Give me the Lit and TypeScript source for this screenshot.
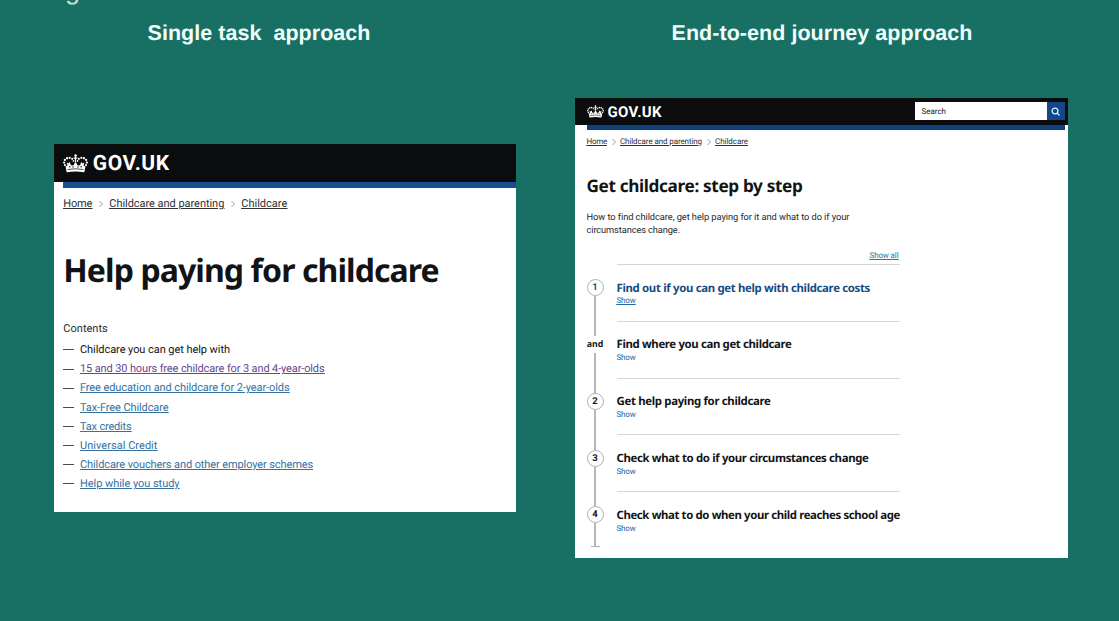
import { LitElement, html, css, svg, nothing } from "lit";
import { customElement, property, query } from "lit/decorators.js";

/** One line of text, tracked out or in so that it fills the given width. */
@customElement("fit-text")
class FitText extends LitElement {
  static styles = css`
    :host { display: inline-block; white-space: pre; }
    .line { text-decoration: inherit; }
  `;
  @property() text = "";
  @property({ type: Number }) width = 0;
  @query(".line") line!: HTMLElement;

  updated() {
    this.line.style.letterSpacing = "0px";
    const natural = this.line.getBoundingClientRect().width;
    if (this.width > 0 && natural > 0) {
      this.line.style.letterSpacing = `${(this.width - natural) / this.text.length}px`;
    }
  }
  render() {
    return html`<span class="line">${this.text}</span>`;
  }
}

const fit = (text: string, width: number, cls = "") =>
  html`<fit-text class=${cls} .text=${text} .width=${width}></fit-text>`;

const crown = svg`
  <g fill="currentColor">
    <circle cx="12" cy="1.500" r="1.200"/><path d="M11.400 2h1.200v6h-1.200zM10.200 3.200h3.600v1.200h-3.600z"/>
    <circle cx="8.800" cy="4.600" r="1"/><circle cx="6.400" cy="3.600" r="1.100"/><circle cx="3.900" cy="4" r="1.100"/>
    <circle cx="1.800" cy="5.600" r="1.100"/><circle cx="1.100" cy="8.100" r="1.100"/><circle cx="1.900" cy="10.500" r="1"/>
    <circle cx="15.200" cy="4.600" r="1"/><circle cx="17.600" cy="3.600" r="1.100"/><circle cx="20.100" cy="4" r="1.100"/>
    <circle cx="22.200" cy="5.600" r="1.100"/><circle cx="22.900" cy="8.100" r="1.100"/><circle cx="22.100" cy="10.500" r="1"/>
    <circle cx="10" cy="6.600" r=".8"/><circle cx="14" cy="6.600" r=".8"/>
    <path d="M3.500 17.200L2.500 11.600l1.800-.6-.8-3 2 1 .9-1.600 1.200 3.200 1.900.2 1-.6L11.300 8h1.400l.8 2.200 1 .6 1.900-.2 1.200-3.200.9 1.600 2-1-.8 3 1.800.6-1 5.600Q12 15.800 3.500 17.200z"/>
  </g>
  <g fill="#0b0c0d"><circle cx="6.600" cy="12" r=".7"/><circle cx="9.600" cy="12.200" r=".7"/><circle cx="14.400" cy="12.200" r=".7"/><circle cx="17.400" cy="12" r=".7"/></g>
  <path d="M4.500 14.700Q12 13.300 19.500 14.700" fill="none" stroke="#0b0c0d" stroke-width=".7"/>`;

const contents = [
  { text: "Childcare you can get help with", width: 150, kind: "plain" },
  { text: "15 and 30 hours free childcare for 3 and 4-year-olds", width: 244.5, kind: "visited" },
  { text: "Free education and childcare for 2-year-olds", width: 209.5, kind: "link" },
  { text: "Tax-Free Childcare", width: 88.5, kind: "link" },
  { text: "Tax credits", width: 51.5, kind: "link" },
  { text: "Universal Credit", width: 77.5, kind: "link" },
  { text: "Childcare vouchers and other employer schemes", width: 233, kind: "link" },
  { text: "Help while you study", width: 99.5, kind: "link" },
];

const steps = [
  { mark: "1", text: "Find out if you can get help with childcare costs", width: 253.5 },
  { mark: "and", text: "Find where you can get childcare", width: 175 },
  { mark: "2", text: "Get help paying for childcare", width: 154 },
  { mark: "3", text: "Check what to do if your circumstances change", width: 252 },
  { mark: "4", text: "Check what to do when your child reaches school age", width: 283.5 },
];

@customElement("app-root")
class AppRoot extends LitElement {
  static styles = css`
    :host {
      display: block; position: relative; box-sizing: border-box;
      width: 1119px; height: 621px; overflow: hidden;
      background: #187065; color: #111315; font-family: Roboto, "Noto Sans", sans-serif;
      text-rendering: geometricPrecision;
    }
    .slide-title { position: absolute; left: 65px; top: -26px; font: 27px/32px "Liberation Sans", sans-serif; color: #c3e3de; }
    .columns { display: grid; grid-template-columns: 462px 493px; column-gap: 59px; padding-left: 54px; }
    .column { display: flex; flex-direction: column; }
    h2 { margin: 0; font: bold 21.500px/30px "Liberation Sans", sans-serif; color: #effffc; padding-top: 17.500px; }
    .left h2 { padding-left: 93.500px; }
    .right h2 { padding-left: 96.500px; }
    .card { background: #fff; box-sizing: border-box; }
    .left .card { margin-top: 96.500px; height: 367.500px; padding-left: 9.300px; }
    .right .card { margin-top: 50.500px; height: 459.500px; padding-left: 11.500px; }
    .head { display: flex; align-items: center; background: #0b0c0d; color: #fff; font-weight: 700; }
    .left .head { height: 38px; margin-left: -9.300px; padding-left: 9.300px; font-size: 21px; line-height: 26px; gap: 4.500px; }
    .left .head fit-text { padding-top: 1px; }
    .right .head { height: 27px; margin-left: -11.500px; padding-left: 11.500px; font-size: 15px; gap: 4px; }
    .crown { display: block; flex: none; }
    .left .crown { width: 25px; height: 19px; }
    .right .crown { width: 17px; height: 13px; }
    .bar { background: #174f91; }
    .left .bar { height: 6px; }
    .right .bar { height: 4.500px; margin-right: 3.500px; background: #10407d; }
    .search { display: flex; margin-left: auto; margin-right: 3.500px; margin-bottom: 1px; height: 18px; width: 150px; background: #fff; color: #222; font: 8px/19px Roboto, sans-serif; }
    .query { flex: 1; padding-left: 7px; }
    .go { display: grid; place-items: center; width: 18px; background: #14478a; }
    .crumbs { display: flex; align-items: center; color: #303236; }
    .crumbs fit-text { text-decoration: underline; }
    .left .crumbs { font-size: 11px; line-height: 20px; margin-top: 6px; }
    .right .crumbs { font-size: 8px; line-height: 12px; margin-top: 6.500px; }
    .chev { display: grid; place-items: center; }
    .left .chev { width: 17px; }
    .right .chev { width: 13px; }
    h1 { margin: 0; font-weight: 700; font-family: "Noto Sans", sans-serif; }
    .left h1 { font-size: 32px; line-height: 40px; margin-top: 36.500px; }
    .right h1 { font-size: 17.200px; line-height: 24px; margin-top: 26.500px; }
    .label { font-size: 11px; line-height: 20px; margin-top: 28.500px; color: #2b2d30; }
    ul { list-style: none; margin: 1.300px 0 0; padding: 0; font-size: 11px; }
    li { display: flex; align-items: center; height: 19.150px; line-height: 19.500px; }
    .dash { width: 10.700px; height: 1px; margin-right: 6px; background: #4a4a4a; }
    .link { color: #35719f; text-decoration: underline; }
    .visited { color: #66478f; text-decoration: underline; }
    .intro { display: flex; flex-direction: column; align-items: flex-start; font-size: 9.300px; line-height: 12.900px; margin-top: 13.700px; color: #26282b; }
    .all { width: 312px; text-align: right; font-size: 8px; line-height: 12px; margin-top: 12.300px; margin-bottom: 1.700px; }
    .step { display: grid; grid-template-columns: 17px 283.500px; column-gap: 13px; height: 56.800px; }
    .step:last-child { height: 56.300px; }
    .rail { display: flex; flex-direction: column; align-items: center; }
    .rail::before { content: ""; width: 2px; height: 15.300px; background: #b4b6b8; }
    .rail::after { content: ""; width: 2px; flex: 1; background: #b4b6b8; }
    .step:first-child .rail::before { background: none; }
    .foot { order: 1; width: 9px; height: 1.500px; background: #aeb0b2; }
    .mark { box-sizing: border-box; width: 17px; height: 17px; font-size: 9.500px; line-height: 16px; font-weight: 700; text-align: center; }
    .ring { border: 1.500px solid #aeb0b2; border-radius: 50%; }
    .word { font: 700 8.800px/17px "Noto Sans", sans-serif; }
    .body { border-top: 1px solid #d3d6d7; padding-top: 16.700px; }
    .name { font: 700 11.400px/14.400px "Noto Sans", sans-serif; display: block; }
    .show { font-size: 8px; line-height: 12px; color: #2566a7; display: block; margin-top: -.6px; }
    .step:first-child .name, .step:first-child .mark { color: #154c84; }
    .step:first-child .show { text-decoration: underline; }
  `;

  crumbs(widths: number[], size: number) {
    return html`<nav class="crumbs">
      ${["Home", "Childcare and parenting", "Childcare"].map((t, i) => html`
        ${i ? html`<span class="chev"><svg width=${size} height=${size * 2} viewBox="0 0 4 8" fill="none" stroke="#97999c"><path d="M.5 1 3.500 4 .5 7"/></svg></span>` : nothing}
        ${fit(t, widths[i])}`)}
    </nav>`;
  }

  logo(width: number) {
    return html`<svg class="crown" viewBox="0 0 24 18" preserveAspectRatio="none">${crown}</svg>${fit("GOV.UK", width)}`;
  }

  render() {
    return html`
      <div class="slide-title">g</div>
      <div class="columns">
        <section class="column left">
          <h2>${fit("Single task  approach", 223)}</h2>
          <div class="card">
            <div class="head">${this.logo(77)}</div>
            <div class="bar"></div>
            ${this.crumbs([29, 115, 46], 4)}
            <h1>${fit("Help paying for childcare", 375.5)}</h1>
            <div class="label">${fit("Contents", 44.5)}</div>
            <ul>${contents.map((c) => html`<li><span class="dash"></span>${fit(c.text, c.width, c.kind)}</li>`)}</ul>
          </div>
        </section>
        <section class="column right">
          <h2>${fit("End-to-end journey approach", 301)}</h2>
          <div class="card">
            <div class="head">${this.logo(54.5)}
              <div class="search">
                <span class="query">${fit("Search", 24.5)}</span>
                <span class="go"><svg width="9" height="9" viewBox="0 0 9 9" fill="none" stroke="#d5efff" stroke-width="1.300"><circle cx="4" cy="4" r="2.900"/><path d="M6 6l2.500 2.500"/></svg></span>
              </div>
            </div>
            <div class="bar"></div>
            ${this.crumbs([20.5, 82, 33], 4)}
            <h1>${fit("Get childcare: step by step", 216)}</h1>
            <div class="intro">
              ${fit("How to find childcare, get help paying for it and what to do if your", 262.5)}
              ${fit("circumstances change.", 93.5)}
            </div>
            <div class="all">${fit("Show all", 29, "link")}</div>
            <div>
              ${steps.map((s, i) => html`<div class="step">
                <div class="rail">
                  <div class="mark ${s.mark === "and" ? "word" : "ring"}">${s.mark === "and" ? fit("and", 16.5) : s.mark}</div>
                  ${i === steps.length - 1 ? html`<div class="foot"></div>` : nothing}
                </div>
                <div class="body">${fit(s.text, s.width, "name")}${fit("Show", 19, "show")}</div>
              </div>`)}
            </div>
          </div>
        </section>
      </div>`;
  }
}
